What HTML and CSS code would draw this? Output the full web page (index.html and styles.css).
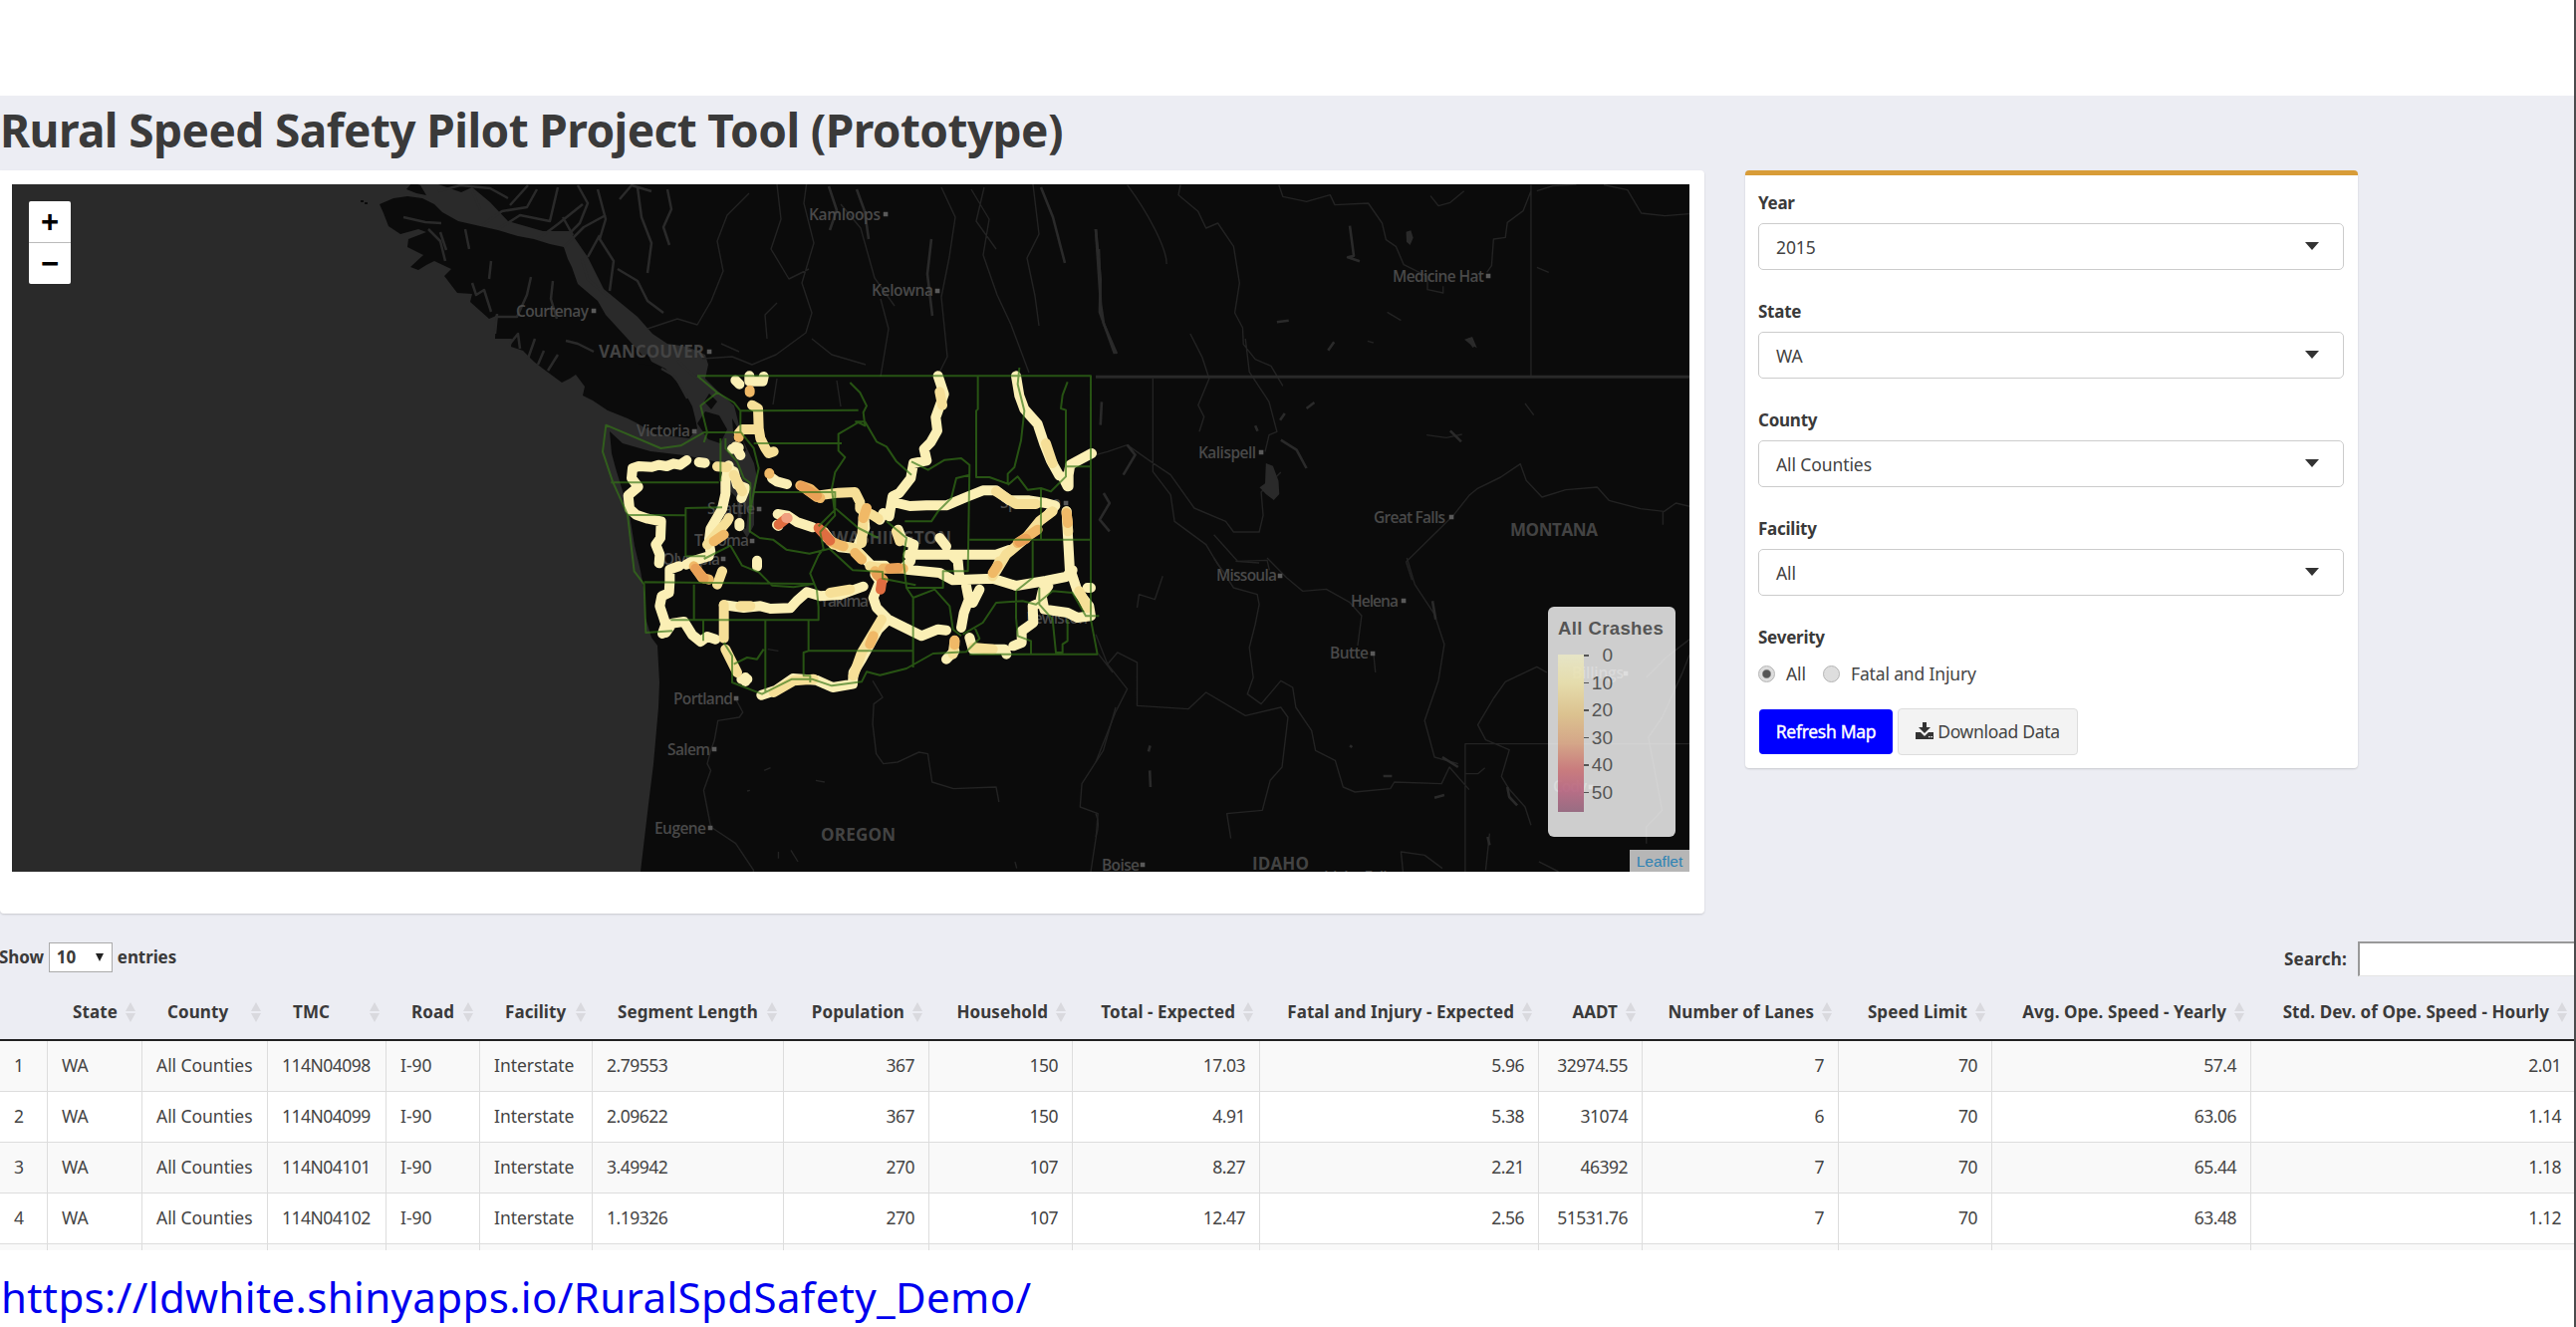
FILE: index.html
```html
<!DOCTYPE html>
<html lang="en">
<head>
<meta charset="utf-8">
<title>Rural Speed Safety Pilot Project Tool</title>
<link rel="stylesheet" href="styles.css">
</head>
<body>
<main class="page">
<section class="dashboard">
  <h1 class="title">Rural Speed Safety Pilot Project Tool (Prototype)</h1>
  <div class="panels">
    <div class="box map-box">
      <div class="map">
        <svg class="map-art" viewBox="12 185 1684 690" preserveAspectRatio="none">
          <rect x="12" y="185" width="1684" height="690" fill="#0b0b0b"/>
          <path class="water" d="M12 185H440L463 193 474 188 492 203 510 222 545 232 572 232 590 258 606 290 640 318 655 335 670 345 690 348 708 356 711 366 708 380 720 392 737 407 742 427 745 440 757 465 760 480 757 500 757 527 750 540 741 525 740 500 730 490 722 470 717 463 687 457 653 453 625 445 612 433 614 455 618 470 625 493 632 517 637 548 643 573 647 595 648 620 654 640 660 648 662 685 661 710 656 767 651 807 643 875H12Z"/>
          <path class="land" d="M381 205 395 199 409 197 424 199 436 205 444 213 460 222 482 227 500 231 520 237 536 240 552 245 566 248 570 260 574 268 580 285 600 302 608 316 630 340 648 360 668 370 680 384 688 395 695 408 698 420 700 430 692 440 675 438 658 436 640 425 630 420 610 412 595 402 585 397 587 388 578 376 572 380 564 384 545 370 536 363 525 352 513 348 514 340 497 340 498 317 491 320 472 303 474 295 459 294 446 277 453 270 436 262 428 266 420 271 412 268 425 256 409 248 410 240 428 233 420 230 402 235 390 227 385 214Z"/>
          <g class="land">
            <path d="M700 425l8-12 14 4 8 14-7 14-12-4zM712 395l8 8-6 8-7-8zM735 420l8 14 6 18-7 8-5-15zM408 190l10 4 10 2-6-10-8-3zM745 505l6 8-2 18-5-4zM640 365l10-10 6 12zM362 201h3v2h-3zM366 203h3v2h-3z"/>
          </g>
          <g class="inlet">
            <path d="M405 218l22 5 16 1M430 230l12 12 5 20M442 233l6 18M467 230l4 20M493 262l-2 18M474 284l4 12 8-5 7 22M497 318h22l10-22 4-18M555 282l-2 18 6 20M568 342l12 3 16 8M497 335l2-20M512 345l8-10 2 15M530 360l7-20M540 366l6-14M550 372l10-16M700 380l-20 -18M690 400l-12-22 -14-8M484 226l20-14 25-4 10-18M500 230l22-14 30 6 8-34M540 240l20-15 25-20M566 248l20-20 22-12M575 236l-10-18M590 258l12-22M584 260l6 20 20 18"/>
            <path d="M440 192l22-6 30 3 18 10M482 210l-8-18M530 186l-18 20M580 186l10 18-8 20-10 10M600 190l8 30-6 20 14 22-4 30M640 188l4 30 10 26-4 30M622 200l12-14 20 6M620 270l20 12 10 20 16 12M670 190l4 20-8 18 6 18"/>
          </g>
          <g class="river">
            <path d="M650 330l30-10 20 6 14-24 12-30-6-30 10-26 22-22M705 360l30-2 20 8 24-10 30-22 6-20-10-30 12-40 -10-40 4-30M724 345l18 8M770 340l-2-24 12-12M812 270l-20 10-18-30 10-30-4-35M844 205l20 24 14 50 20 28M884 300l8 30-8 48M945 188l14 30-6 40-8 40 6 60-10 20M975 190l18 30-6 36 14 40 14 30 18 48M1000 250l-20-28 8-34M1037 185l6 50-12 24 8 38 4 30"/>
            <path class="lake" d="M860 190l8 22 4 28M832 187l8 24-7 20M935 240l-4 35 5 42M1045 188l12 30 12 46M1100 230l5 75 3 20 13 30M1103 250l2 55"/>
            <path d="M780 380l-4 26M815 340l20 16 34 10M840 382l4 26"/>
          </g>
          <!-- rivers and lakes east of the Cascades -->
          <g class="river" transform="translate(1100 180) scale(.39541 .33333)">
            <path d="M80 17Q120 80 150 150T180 255M215 17l-5 30 50 50 20 50 30-15 40 70 15 110-12 90 20 45 2 50 30 45 40 20 30 60M465 17l10 35 60 15 60-20 12 30 85-5 35 60 10 50 25 20 20 55 60 35 0 40 40 10 0-20M1105 17v575M1105 35l-20 60-40 35-5 45-30 5-5 80-12 20M1120 35l40-15 60-5M1290 17l60 15 35 70 60 8 62-6M240 465l30 70 18 65-28 80 15 35-12 45M380 480l10 100 50 90 20 90-20 10-10 50M0 830l30-10 50-20 60 50 50 40 60 100 80 40 20 32 65 0 10-50-5-70 50-60M145 600v280l45 70 10 80 80 70 30 60 20 30M300 1070l60 80 75-3 6 30M1508 985l-35-10-30 25-60-8-80-25-30-40-80 8-60 22-40-50-15-50-50 40-60 35-20 20-40 60-120 140 15 55M1440 1000v40M840 770l50 8 40-10M740 400l35 25M690 487l15 5M1120 265l30 15M1090 675l22 35M850 50l20 30 30-10 35-35"/>
            <path class="lake" d="M0 150l12 150-2 100 38 125M15 670l-3 70M80 800l20 30-30 60M470 785l40 30 25 55M645 140l10 90-15 5 30 12M795 160l2 25M945 480l15 25M900 757l28 33M20 945l15 30-25 50 25 35M480 705l-12 20M535 690l20-18M590 515l15-25M460 430l30-5M405 742l6 16"/>
            <path fill="#2a2a2a" stroke="none" d="M432 855l18 8 14 45 2 40-14 18-20-18-16-20 14-12zM788 158l12-4 6 22-8 22-9-10zM936 482l20-8 12 34-16-10z"/>
            <path d="M0 595H1508" stroke="#292929" stroke-width="3"/>
          </g>
          <g class="river" transform="translate(1100 560) scale(.39541 .33333)">
            <path d="M300 0l50 90 60 20 5 30-10 60-15 70 10 90-15 50 35 30 50-70 30 20 8 60 40 70 10 60 50 30 20 80 30 15 90-10 10-20 120 5 20-50 50 68M435 0l50 60 40 40 60-6 60 40 30 40-10 90M355 10l60 5M0 230l30 90 50 75-30 70-30 90-20 60M30 320l25-35 50 30v130l130 10 45-50 100 70 90-25 18 30-15 150-30 40-20 90-90 10 10 75M790 0l20 80 50 90 25 90-15 110-35 120 25 110 60 20M1145 345l-25-17-80 45-30 50-40 80 20 45 60 30-20 80 20 40M938 945V560H1508M1508 245l-60 55-50 60M1508 290l-20 60-50 130-35 60 35 220-40 50 0 50M940 650h30l18-18M1045 690l45 60 15 55M1000 830l-10 110M780 945l-5-60 60 10 45 40M1125 915l50 30M105 150l5-40 40 15 20-70M0 770q12 30 0 70M705 285l5 60"/>
            <path class="lake" d="M855 130l8 55M1045 690l5 30 20 25M995 840l5 25M137 640l2 50M138 565l-4 18M730 657h22M860 722l25-8M880 600l40 30M645 565l6 5"/>
          </g>
          <g class="river" transform="translate(560 560) scale(.35714 .33333)">
            <path d="M500 425l20 40-10 15-60 10-10 60-10 30-10 40 10 20-20 60 20 110 70 50 50 80-2 55M885 370l28 50-25 20-3 60 10 90 20 30 40-5 60-30 25 5 12 85 60 20 120-5 8 45M1520 290l40 55M1568 450l-35 130-60 100-5 70 50 20-5 70-15 105"/>
            <path d="M580 640l18-8M725 670l25 5M540 700l-8 2M655 880l20 35M620 885v20M590 275l30 5M1285 915l5 20"/>
          </g>

          <g class="places">
            <text x="812" y="221" textLength="72">Kamloops</text><text x="875" y="297" textLength="62">Kelowna</text>
            <text x="518" y="318" textLength="73">Courtenay</text><text class="big" x="601" y="359" textLength="106">VANCOUVER</text>
            <text x="639" y="438" textLength="54">Victoria</text><text x="710" y="516" textLength="48">Seattle</text>
            <text x="697" y="548" textLength="55">Tacoma</text><text x="665" y="567" textLength="58">Olympia</text>
            <text class="big" x="835" y="546" textLength="120">WASHINGTON</text><text x="823" y="609" textLength="49">Yakima</text>
            <text x="1004" y="510" textLength="61">Spokane</text><text x="1030" y="626" textLength="62">Lewiston</text>
            <text x="676" y="707" textLength="60">Portland</text><text x="670" y="758" textLength="43">Salem</text>
            <text x="657" y="837" textLength="52">Eugene</text><text class="big" x="824" y="844" textLength="75">OREGON</text>
            <text x="1106" y="874" textLength="38">Boise</text><text class="big" x="1257" y="873" textLength="57">IDAHO</text>
            <text x="1329" y="886" textLength="70">Idaho Falls</text><text x="1221" y="583" textLength="61">Missoula</text>
            <text x="1356" y="609" textLength="48">Helena</text><text x="1335" y="661" textLength="39">Butte</text>
            <text x="1203" y="460" textLength="58">Kalispell</text><text x="1379" y="525" textLength="72">Great Falls</text>
            <text class="big" x="1516" y="538" textLength="88">MONTANA</text><text x="1398" y="283" textLength="92">Medicine Hat</text>
            <text x="1578" y="681" textLength="52">Billings</text><text x="1559" y="795" textLength="34">Cody</text>
            <path class="dots" d="M889 215h.1M941 292h.1M596 312h.1M712 353h.1M697 433h.1M762 511h.1M755 543h.1M726 561h.1M878 604h.1M1070 505h.1M739 701h.1M717 752h.1M713 831h.1M1147 868h.1M1285 578h.1M1409 603h.1M1378 656h.1M1266 454h.1M1457 519h.1M1494 277h.1M1632 676h.1M1597 790h.1"/>
          </g>

          <!-- highway segments coloured by crash count, county lines above them -->
          <g transform="translate(600 360) scale(.33333)">
            <g class="roads">
              <path stroke="#fbefb5" d="M457 52v16h40l3-14M415 65l12 12M415 265l15 26M405 272l20-4M268 306l-20 14-20-4-20 8-25-4-20 6-40-2-18 6-3 30 20 26-30 26 4 40 20 18 35 12 40 8-2 50-14 20 12 30-2 26M305 312l18 2M395 322l-10 45 0 40-10 45-35 60-5 40 5 30M385 330l25 10 10 40 25 10-12 30M335 595l-50 15-18 10M245 625l-28 10 0 35-2 35-22 10-6 30 10 30 8 25-10 28M205 825l20-28 35-5 25 40 25 20 20-15 25 8M380 742l60 8 50-5 30 8 60-2 20-22 30-26 40 12 60-4 70-25M427 495v10M480 608v18M433 965h18M445 960v12M540 500l4 4M542 468l30 5 30 20 45 15M570 378l-30-8-15-10M690 540l40 28 45 5 50 50 40 0M1025 52l18 55-25 70 5 40-20 35-20 20 8 35-40 8-8 45-35 45-20 10-10 60M890 432l50 12 50-2 60 0 60-25 50-20 40 0 40 30 60 0 50 8 28 8-20 25M1260 52l10 60 15 40 40 45 20 60 20 50 25 45M1418 385l0-35 5-30 65-35M1400 355l15 30M1412 460l10 180M905 515l12 30 35 15-10 50-15 15M935 590h265l40-14M1030 540l20 25M1065 590l20 20 5 55M930 635l100 10 40 22 120-5 70 22 90-15 60-12 20-20M1110 685l8 40-15 40-8 45M1150 695l-20 40M1425 640l20 60 35 45 5 30-40 5-30-15-70-10-8-40 20-30M1340 700l-8 35-22 10 2 50-35 25 0 35-25 10M1475 690h10M835 650l15 20-20 50 10 30 35 35 30 15 70 35 50-20 25 3M875 785l-30 30-50 90-25 40-2 35-60 10-50-22-70-5-50 35-45 15M1120 840l10 35 95 0 6 15M1050 905l25-25M850 485l10-20M785 560l20-50-5-60"/>
              <path stroke="#f6df97" d="M465 140l18 10 2 60 5 30 15 30 10 15 15-5M425 225l10-12 50 0M360 325l30 2M330 560l60-70 5-10M375 640l-15 40M380 742v100M385 875l35 70M430 745h30M665 412l60-8 50-2 15 30 0 20 40 20 15 10M800 475l-5 80M680 520l30 40 60 10 25 25M820 625l30 5 20 0M855 785l-60 100-25 70M700 705l60-10M650 965l-60 5-60 35M1200 640l30-50 60-50 40-50 40-30M1350 255l20 60M1412 460l5 60M1450 700l25 50M1190 655l20-45M1075 850l-5 40M900 520l10 30M1130 870l60 5M1030 100l8 40M1200 400l60 38h60M410 350l25 50"/>
              <path stroke="#f0b967" d="M458 95v6M517 345v2M425 235v2M610 382l30 10 30 28M630 395l30 22M290 625l25 35 20 5M800 480l10-30M860 632l60 0M835 640l20 25M700 550l40 15M1265 555l60-40M1412 465l4 30M820 860l10-25M1190 645l15-22M1075 848v14M350 550l30-20M775 585l20 20"/>
              <path stroke="#e9a056" d="M615 385l45 28M295 632l25 30M880 632l25-2M1270 552l20-10M840 650l20 15"/>
              <path stroke="#e06d40" d="M545 500l25-20M665 510l35 38M855 675l-3 20"/>
              <path stroke="#f0a07f" d="M568 480h4"/>
            </g>
            <path class="counties" d="M300 52H1485V785l20 105H1120M300 52l60 50 50 30 20 25v65h-110l-70 40-60 8L25 200l-10 80 30 90 45 100 20 170 30 40 5 145 80-5M360 102l-50 40 20 80-10 30M430 157l355-2M470 255l265 0M470 402h245M40 373h325M90 470l175 2v-22l110-2M265 450v145h60M370 240v130M385 240v30l35 40 20 50 20 15-2 145 30 20 40 5 40 30 70 12 60-15 70 65 90 5v20l100 20M430 220l40 50 15 60-15 70-10 60M140 673l510 5-60 10-65-5-40-40-50-20-35-60-80 40M290 680v105M220 787h445v-40l-5-50-20-50 25-55 15-20-10-50 45-50-10-80 10-50 30-45-20-20v-50l60-35 20 10-5-40 10-20-20-40-30-30M775 190l30 0 35 60 30 15 30 45 45 40M945 310l50 25 50-30 50-5 25 20-5 320h-75v50H930M1120 350l-40 10-15 60-40 40-20 30-80 0M1145 52v100l-5 5v200l40 0 55 20 0-30 20-20 20-80 10-90-20-80 5-50M1235 380l30-25 30 40 40-5 30 10 45-45V155l-15-5 5-40 15-40M1410 350v-25h75M1120 545h365M1335 390v155M715 455l-50 50M715 400l0 50 70 60 60 30M870 490l60 50-10 60 10 90 20 30v210M950 720l65-25 45 50 10 70 25 20M1100 830l60-35 40-60 80-5 40 10 50-40 60 5 40 70h40M1260 700v80l5 55 40 15v40M1310 550v110l-50 40M1330 690v50l40 45 10 100h20V860l15-10v-65M635 785v95h315M635 880l-15 5v70h20v20M505 787v220M318 790v60M380 855l25 40 0 80 90 35 90-45 60 0 60 20 90-12 15-30 40 10 80-20 80-45 100-5 40-40-15-35M410 920l40-20 30 5 20-30"/>
          </g>
        </svg>
        <div class="zoom-control"><span>+</span><span>−</span></div>
        <div class="legend">
          <strong class="legend-title">All Crashes</strong>
          <div class="legend-scale">
            <div class="ramp"></div>
            <ul class="ticks"><li>0</li><li>10</li><li>20</li><li>30</li><li>40</li><li>50</li></ul>
          </div>
        </div>
        <a class="attribution">Leaflet</a>
      </div>
    </div>
    <div class="box controls">
      <label class="label">Year</label><div class="select">2015</div>
      <label class="label">State</label><div class="select">WA</div>
      <label class="label">County</label><div class="select">All Counties</div>
      <label class="label">Facility</label><div class="select">All</div>
      <label class="label">Severity</label>
      <div class="radios"><i class="radio checked"></i><span class="opt-all">All</span><i class="radio"></i><span>Fatal and Injury</span></div>
      <div class="buttons">
        <button class="btn primary">Refresh Map</button>
        <button class="btn plain"><svg class="dl" viewBox="0 0 18 17"><path fill="#333" d="M7 0h4v5h4L9 11 3 5h4zM0 10h5l4 4 4-4h5v7H0zM13 14v1.300h1.500V14zM15.500 14v1.300H17V14z"/></svg>Download Data</button>
      </div>
    </div>
  </div>
  <div class="table-tools">
    <div class="length">Show <span class="length-select">10<i></i></span> entries</div>
    <div class="search">Search:<span class="search-input"></span></div>
  </div>
  <table class="data">
    <colgroup><col style="width:48px"><col style="width:95px"><col style="width:126px"><col style="width:119px"><col style="width:94px"><col style="width:113px"><col style="width:192px"><col style="width:146px"><col style="width:144px"><col style="width:188px"><col style="width:280px"><col style="width:104px"><col style="width:197px"><col style="width:154px"><col style="width:260px"><col style="width:324px"></colgroup>
    <thead><tr><th class="none"></th><th>State</th><th>County</th><th>TMC</th><th>Road</th><th>Facility</th><th>Segment Length</th><th class="n">Population</th><th class="n">Household</th><th class="n">Total - Expected</th><th class="n">Fatal and Injury - Expected</th><th class="n">AADT</th><th class="n">Number of Lanes</th><th class="n">Speed Limit</th><th class="n">Avg. Ope. Speed - Yearly</th><th class="n">Std. Dev. of Ope. Speed - Hourly</th></tr></thead>
    <tbody>
      <tr><td>1</td><td>WA</td><td>All Counties</td><td>114N04098</td><td>I-90</td><td>Interstate</td><td>2.79553</td><td class="n">367</td><td class="n">150</td><td class="n">17.03</td><td class="n">5.96</td><td class="n">32974.55</td><td class="n">7</td><td class="n">70</td><td class="n">57.4</td><td class="n">2.01</td></tr>
      <tr><td>2</td><td>WA</td><td>All Counties</td><td>114N04099</td><td>I-90</td><td>Interstate</td><td>2.09622</td><td class="n">367</td><td class="n">150</td><td class="n">4.91</td><td class="n">5.38</td><td class="n">31074</td><td class="n">6</td><td class="n">70</td><td class="n">63.06</td><td class="n">1.14</td></tr>
      <tr><td>3</td><td>WA</td><td>All Counties</td><td>114N04101</td><td>I-90</td><td>Interstate</td><td>3.49942</td><td class="n">270</td><td class="n">107</td><td class="n">8.27</td><td class="n">2.21</td><td class="n">46392</td><td class="n">7</td><td class="n">70</td><td class="n">65.44</td><td class="n">1.18</td></tr>
      <tr><td>4</td><td>WA</td><td>All Counties</td><td>114N04102</td><td>I-90</td><td>Interstate</td><td>1.19326</td><td class="n">270</td><td class="n">107</td><td class="n">12.47</td><td class="n">2.56</td><td class="n">51531.76</td><td class="n">7</td><td class="n">70</td><td class="n">63.48</td><td class="n">1.12</td></tr>
      <tr><td></td><td></td><td></td><td></td><td></td><td></td><td></td><td></td><td></td><td></td><td></td><td></td><td></td><td></td><td></td><td></td></tr>
    </tbody>
  </table>
</section>
<footer class="footer"><a class="url">https://ldwhite.shinyapps.io/RuralSpdSafety_Demo/</a><span class="page-no">8</span></footer>
</main>
</body>
</html>
```
FILE: styles.css
```css
* { box-sizing: border-box; }
body { margin: 0; background: #fff; color: #3a3a3a; font: 17.5px/1 "Noto Sans", sans-serif; }
.page { width: 2586px; height: 1332px; overflow: hidden; padding-top: 96px; border-right: 2px solid #4c4c4e; }
.dashboard { height: 1159px; overflow: hidden; background: #ecedf3; }
.title { margin: 0; height: 75px; font-size: 46px; line-height: 68px; font-weight: 700; letter-spacing: -.6px; white-space: nowrap; }
.panels { display: flex; align-items: flex-start; gap: 41px; height: 774px; }
.box { background: #fff; border-radius: 4px; box-shadow: 0 1px 2px rgba(0,0,0,.15); }
.map-box { width: 1711px; height: 746px; padding: 14px 15px 42px 12px; border-top-left-radius: 0; }
.map { position: relative; width: 1684px; height: 690px; overflow: hidden; }
.map-art { display: block; width: 100%; height: 100%; }
.water { fill: #2a2a2a; }
.land { fill: #0b0b0b; }
.inlet { fill: none; stroke: #2a2a2a; stroke-width: 2.5; stroke-linejoin: round; }
.river { fill: none; stroke: #232323; stroke-width: 1.4; stroke-linejoin: round; }
.river path { vector-effect: non-scaling-stroke; }
.river .lake { stroke: #2a2a2a; stroke-width: 2.6; }
.roads { fill: none; stroke-width: 30; stroke-linecap: round; stroke-linejoin: round; }
.counties { fill: none; stroke: #357618; stroke-opacity: .68; stroke-width: 6; stroke-linejoin: round; }
.places { font: 600 15.5px "Open Sans", sans-serif; fill: #494949; }
.places .big { font-size: 17px; font-weight: 700; fill: #434343; }
.dots { stroke: #5a5a5a; stroke-width: 4.5; stroke-linecap: square; }

.zoom-control { position: absolute; left: 17px; top: 17px; width: 42px; height: 83px; background: #fff; border-radius: 2px; display: flex; flex-direction: column; }
.zoom-control span { flex: 1; display: flex; align-items: center; justify-content: center; font: 700 31px/1 "Liberation Sans", sans-serif; color: #000; }
.zoom-control span + span { border-top: 1px solid #bbb; }
.legend { position: absolute; left: 1542px; top: 424px; width: 128px; height: 231px; padding: 10px; background: rgba(255,255,255,.8); border-radius: 6px; font-family: "Liberation Sans", sans-serif; color: #555; }
.legend-title { display: block; height: 38px; line-height: 23px; font-size: 18.5px; white-space: nowrap; letter-spacing: .4px; }
.legend-scale { display: flex; }
.ramp { width: 26px; height: 158px; opacity: .8; background: linear-gradient(#eceac4, #ebe0a4 18%, #dfbf80 38%, #d69d77 56%, #c8686a 73%, #b35674 86%, #8b5570); }
.ticks { list-style: none; margin: -13px 0 0; padding: 0; width: 30px; }
.ticks li { position: relative; height: 27.600px; line-height: 28px; font-size: 19px; text-align: right; padding-right: 1px; }
.ticks li::before { content: ""; position: absolute; left: 0; top: 13px; width: 5px; height: 1.500px; background: #555; }
.attribution { position: absolute; right: 0; bottom: 0; width: 60px; height: 22px; background: rgba(255,255,255,.7); color: #2f83b4; font: 15.500px/23px "Liberation Sans", sans-serif; text-align: center; }

.controls { width: 615px; height: 600px; border-top: 5px solid #d89c38; padding: 14px 14px 0 13px; }
.label { display: block; height: 34px; line-height: 28px; font-size: 17px; font-weight: 700; letter-spacing: -.25px; }
.select { position: relative; height: 47px; margin-bottom: 28px; border: 1.500px solid #ccc; border-radius: 5px; padding-left: 17px; line-height: 46px; letter-spacing: -.1px; color: #444; }
.select::after { content: ""; position: absolute; right: 24px; top: 18px; border: 7px solid transparent; border-top: 8px solid #333; border-bottom: 0; }
.radios { display: flex; align-items: center; height: 33px; letter-spacing: -.15px; color: #444; }
.radio { width: 17px; height: 17px; border-radius: 50%; border: 1.500px solid #b5b5b5; background: #dedede; margin-right: 11px; }
.radios .radio:first-child { margin-right: 11px; }
.radio.checked { background: radial-gradient(circle, #555 0 3.500px, #ddd 5px); }
.opt-all { width: 37px; }
.buttons { display: flex; align-items: center; gap: 5px; margin-top: 18px; }
.btn { font: 17.500px/1 "Noto Sans", sans-serif; letter-spacing: -.3px; padding: 0; border-radius: 4px; white-space: nowrap; }
.primary { width: 134px; height: 45px; margin-left: 1px; background: #00f; border: 0; color: #fff; -webkit-text-stroke: .4px #fff; }
.plain { display: flex; align-items: center; justify-content: center; gap: 4px; width: 181px; height: 47px; background: #f3f3f3; border: 1.500px solid #ddd; color: #444; }
.dl { width: 18px; height: 17px; margin-top: -3px; }

.table-tools { display: flex; justify-content: space-between; height: 43px; font-weight: 700; font-size: 17px; letter-spacing: -.1px; overflow: hidden; }
.length { display: flex; align-items: center; height: 31px; gap: 5px; margin-left: -1px; }
.length-select { display: flex; align-items: center; justify-content: space-between; width: 64px; height: 30px; padding: 0 8px 0 7px; background: #fff; border: 1.500px solid #aaa; }
.length-select i { border: 4px solid transparent; border-top: 8px solid #222; border-bottom: 0; }
.search { display: flex; align-items: center; height: 35px; letter-spacing: .2px; }
.search-input { width: 217px; height: 35px; margin-left: 11px; background: #fff; border: 2px solid #999; border-right: 0; border-bottom: 1px solid #e4e4e4; }
.data { width: 2584px; table-layout: fixed; border-collapse: separate; border-spacing: 0; }
.data th { position: relative; height: 57px; padding: 0 25px; border-bottom: 2px solid #222; font-size: 17px; font-weight: 700; letter-spacing: .08px; text-align: left; white-space: nowrap; }
.data th::before, .data th::after { content: ""; position: absolute; right: 7px; border: 5px solid transparent; }
.data th::before { top: 18px; border-top: 0; border-bottom: 9px solid #d9d9de; }
.data th::after { top: 29px; border-bottom: 0; border-top: 9px solid #d9d9de; }
.data .none::before, .data .none::after { display: none; }
.data td { height: 51px; padding: 0 14px; border-right: 1px solid #ddd; border-bottom: 1.500px solid #ddd; background: #fff; letter-spacing: -.05px; color: #444; white-space: nowrap; }
.data tr:nth-child(odd) td { background: #f9f9f9; }
.data td:last-child { border-right: 0; padding-right: 13px; }
.data .n { text-align: right; }
.data td.n, .data td:nth-child(4), .data td:nth-child(7) { letter-spacing: -.5px; }
.footer { display: flex; justify-content: space-between; height: 77px; overflow: hidden; }
.url { padding-left: 1px; font-size: 42px; line-height: 93px; letter-spacing: .37px; color: #00e; white-space: nowrap; }
.page-no { margin: 72px 25px 0 0; font-size: 18px; line-height: 22px; color: #777; }
```
